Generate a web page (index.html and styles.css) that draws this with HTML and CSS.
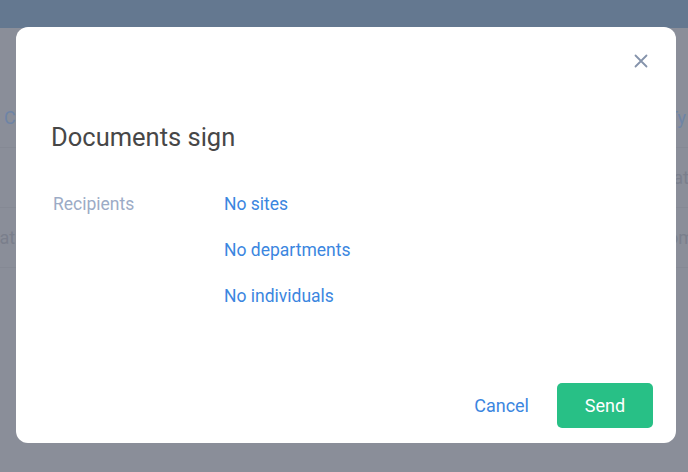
FILE: index.html
```html
<!DOCTYPE html>
<html>
<head>
<meta charset="utf-8">
<link rel="stylesheet" href="styles.css">
</head>
<body>
<div class="page">
  <header class="topbar"><span class="topbar-text">Palmira Ro</span></header>
  <div class="table">
    <div class="row"><span class="cell-l">C</span><span class="cell-r">Ty</span></div>
    <div class="row"><span class="cell-l"></span><span class="cell-r">Stat</span></div>
    <div class="row"><span class="cell-l">Statu</span><span class="cell-r">Com</span></div>
  </div>
</div>

<div class="modal">
  <div class="modal-top">
    <button class="close" aria-label="Close">
      <svg width="14" height="14" viewBox="0 0 14 14"><path d="M1.5 1.5 L12.5 12.5 M12.5 1.5 L1.5 12.5" stroke="#8593ab" stroke-width="1.8" stroke-linecap="round"/></svg>
    </button>
  </div>
  <h1 class="title">Documents sign</h1>
  <div class="fields">
    <div class="label">Recipients</div>
    <div class="values">
      <a class="link">No sites</a>
      <a class="link">No departments</a>
      <a class="link">No individuals</a>
    </div>
  </div>
  <div class="footer">
    <a class="cancel">Cancel</a>
    <button class="send">Send</button>
  </div>
</div>
</body>
</html>
```
FILE: styles.css
```css
* { box-sizing: border-box; }
html, body { margin: 0; padding: 0; }
body {
  width: 688px;
  height: 472px;
  overflow: hidden;
  background: #8a8e99;
  font-family: Roboto, "Liberation Sans", sans-serif;
  position: relative;
}
.page { width: 688px; }
.topbar {
  height: 28px;
  background: #647890;
  display: flex;
  justify-content: flex-end;
  align-items: flex-start;
}
.topbar-text {
  color: #9aa6b8;
  font-size: 14px;
  line-height: 14px;
  margin-top: -12px;
  margin-right: 4px;
}
.table { padding-top: 60px; }
.row {
  height: 60px;
  border-bottom: 1px solid #858994;
  display: flex;
  justify-content: space-between;
  align-items: center;
  font-size: 18px;
}
.cell-l { color: #6e84a6; margin-left: 4px; }
.row:nth-child(3) .cell-l { color: #7a7f8c; margin-left: -17px; }
.cell-r { color: #6e84a6; margin-right: 2px; }
.row:nth-child(2) .cell-r { color: #7a7f8c; margin-right: -1px; }
.row:nth-child(3) .cell-r { color: #7a7f8c; margin-right: -6px; }

.modal {
  position: absolute;
  left: 16px;
  top: 27px;
  width: 660px;
  height: 416px;
  background: #fff;
  border-radius: 12px;
  display: flex;
  flex-direction: column;
}
.modal-top {
  display: flex;
  justify-content: flex-end;
  padding: 22px 23px 0;
}
.close {
  width: 24px;
  height: 24px;
  padding: 0;
  border: none;
  background: none;
  display: flex;
  align-items: center;
  justify-content: center;
}
.title {
  margin: 49px 0 0 35px;
  font-size: 25.5px;
  line-height: 30px;
  font-weight: 400;
  color: #474747;
}
.fields {
  margin-top: 29px;
  display: flex;
  padding-left: 37px;
}
.label {
  width: 171px;
  font-size: 17.5px;
  line-height: 46px;
  color: #9cabc6;
}
.values {
  display: flex;
  flex-direction: column;
}
.link {
  font-size: 17.5px;
  line-height: 46px;
  color: #3b86e0;
}
.footer {
  margin-top: auto;
  display: flex;
  justify-content: flex-end;
  align-items: center;
  gap: 28px;
  padding: 0 23px 15px 0;
}
.cancel {
  font-size: 18px;
  color: #3b86e0;
}
.send {
  width: 96px;
  height: 45px;
  border: none;
  border-radius: 5px;
  background: #28c086;
  color: #fff;
  font-family: Roboto, "Liberation Sans", sans-serif;
  font-size: 18px;
}
```
